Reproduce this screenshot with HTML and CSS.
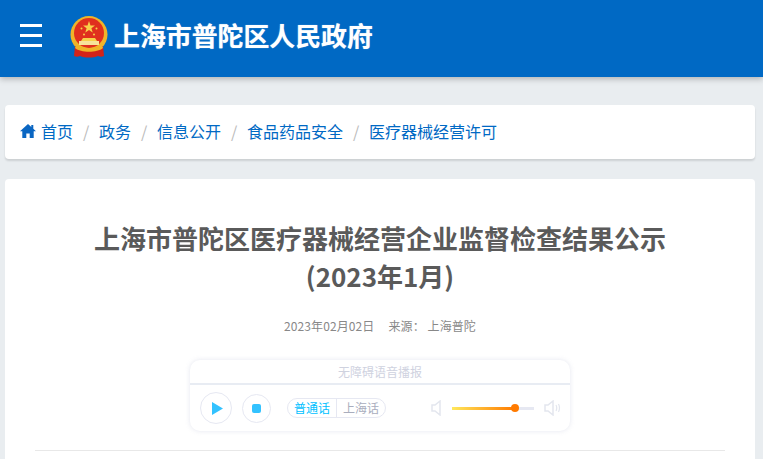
FILE: index.html
```html
<!DOCTYPE html>
<html lang="zh-CN">
  <head>
    <meta charset="UTF-8" />
    <meta name="viewport" content="width=device-width, initial-scale=1.0" />
    <title>上海市普陀区人民政府</title>
    <link rel="stylesheet" href="styles.css">
  </head>
  <body>
    <header class="site-header">
      <button class="menu-btn" aria-label="菜单"><span></span><span></span><span></span></button>
      <svg class="emblem" viewBox="0 0 40 42" width="40" height="42">
        <circle cx="20" cy="18.500" r="18.500" fill="#f0b429" />
        <circle cx="20" cy="17" r="15" fill="#e0301e" />
        <polygon points="20,5 21.500,9.500 26,9.500 22.400,12.200 23.700,16.500 20,13.900 16.300,16.500 17.600,12.200 14,9.500 18.500,9.500" fill="#f7d24a" />
        <circle cx="12.500" cy="12.500" r="1" fill="#f7d24a" />
        <circle cx="27.500" cy="12.500" r="1" fill="#f7d24a" />
        <circle cx="15" cy="18.500" r="1" fill="#f7d24a" />
        <circle cx="25" cy="18.500" r="1" fill="#f7d24a" />
        <path d="M14 22h12l2 3H12z" fill="#f7d24a" />
        <rect x="10" y="25" width="20" height="4" fill="#f7e39a" />
        <path d="M6 30c5 3 23 3 28 0l1 10c-2 1-4 1-6 0-5 2-13 2-18 0-2 1-4 1-6 0z" fill="#d3231a" />
        <path d="M7 29c4 4 22 4 26 0l1 3c-6 5-22 5-28 0z" fill="#f0b429" />
      </svg>
      <div class="site-name">上海市普陀区人民政府</div>
    </header>

    <nav class="crumbs card">
      <svg class="home-icon" viewBox="0 0 16 14" width="16" height="14">
        <path d="M8 0 0 7.200h2.300V14h4V9.600h3.400V14h4V7.200H16l-2.700-2.400V1h-2v2z" fill="#0a66c2" />
      </svg>
      <a href="#">首页</a><i>/</i>
      <a href="#">政务</a><i>/</i>
      <a href="#">信息公开</a><i>/</i>
      <a href="#">食品药品安全</a><i>/</i>
      <a href="#">医疗器械经营许可</a>
    </nav>

    <main class="article card">
      <h1>上海市普陀区医疗器械经营企业监督检查结果公示<br>(2023年1月)</h1>
      <div class="meta"><span>2023年02月02日</span><span>来源：&nbsp;上海普陀</span></div>

      <div class="player">
        <div class="player-title">无障碍语音播报</div>
        <div class="player-controls">
          <button class="round-btn play" aria-label="播放">
            <svg viewBox="0 0 11 13" width="11" height="13"><path d="M0 0l11 6.500L0 13z" fill="#33c2ff" /></svg>
          </button>
          <button class="round-btn stop" aria-label="停止"><span></span></button>
          <div class="lang">
            <span class="on">普通话</span><span>上海话</span>
          </div>
          <svg class="vol-icon low" viewBox="0 0 12 16" width="12" height="16">
            <path d="M9 1 4 5H1v6h3l5 4z" fill="none" stroke="#e3e6ee" stroke-width="1.500" />
          </svg>
          <div class="slider"><div class="slider-fill" style="width: 77%"></div></div>
          <svg class="vol-icon high" viewBox="0 0 17 16" width="17" height="16">
            <path d="M9 1 4 5H1v6h3l5 4z" fill="none" stroke="#e3e6ee" stroke-width="1.500" />
            <path d="M12 5q1.500 3 0 6M14.500 4q2 4 0 8" fill="none" stroke="#e3e6ee" stroke-width="1.200" />
          </svg>
        </div>
      </div>
      <hr class="rule">
    </main>
  </body>
</html>
```

FILE: styles.css
```css
* {
  box-sizing: border-box;
}

html,
body {
  height: 459px;
  overflow: hidden;
}

body {
  margin: 0;
  background: #e9edf0;
  font-family: "Noto Sans CJK SC", "Liberation Sans", sans-serif;
}

.site-header {
  display: flex;
  align-items: center;
  height: 77px;
  padding: 0 0 6px 20px;
  background: #0069c4;
  box-shadow: 0 2px 6px rgba(0, 0, 0, 0.25);
}

.menu-btn {
  display: flex;
  flex-direction: column;
  gap: 7px;
  width: 22px;
  padding: 0;
  border: 0;
  background: none;
}

.menu-btn span {
  height: 3px;
  background: #fff;
}

.emblem {
  margin-left: 27px;
  margin-top: 2px;
}

.site-name {
  margin-left: 5px;
  margin-bottom: 2px;
  color: #fff;
  font-size: 25.900px;
  font-weight: 700;
  text-shadow: 0 0 1px rgba(255, 255, 255, 0.6);
}

.card {
  width: 750px;
  margin-left: 5px;
  background: #fff;
  border-radius: 4px;
}

.crumbs {
  display: flex;
  align-items: center;
  height: 54px;
  margin-top: 28px;
  padding: 0 0 2px 15px;
  font-size: 16px;
  box-shadow: 0 2px 2px rgba(0, 0, 0, 0.12);
}

.crumbs a {
  color: #0069c4;
  text-decoration: none;
}

.crumbs i {
  width: 26px;
  color: #bbb;
  text-align: center;
  font-style: normal;
}

.home-icon {
  margin-right: 5px;
}

.article {
  height: 300px;
  margin-top: 20px;
  padding: 40px 30px 0;
  text-align: center;
}

.article h1 {
  margin: 0;
  color: #5a5a5a;
  font-size: 26px;
  line-height: 38px;
  font-weight: 700;
}

.meta {
  display: flex;
  justify-content: center;
  gap: 14px;
  margin-top: 22px;
  color: #888;
  font-size: 12px;
  line-height: 18px;
  letter-spacing: 0.1px;
}

.player {
  width: 380px;
  height: 71px;
  margin: 25px auto 0;
  background: #fff;
  border-radius: 10px;
  box-shadow: 0 0 5px rgba(130, 140, 180, 0.22);
}

.player-title {
  height: 25px;
  border-bottom: 2px solid #e8ecf3;
  color: #cfd2df;
  font-size: 12px;
  line-height: 24px;
}

.player-controls {
  display: flex;
  align-items: center;
  height: 46px;
  padding-left: 10px;
}

.round-btn {
  display: flex;
  align-items: center;
  justify-content: center;
  padding: 0;
  border: 1px solid #e6e8f2;
  border-radius: 50%;
  background: #fff;
}

.round-btn.play {
  width: 32px;
  height: 32px;
  padding-left: 2px;
}

.round-btn.stop {
  width: 29px;
  height: 29px;
  margin-left: 10px;
}

.round-btn.stop span {
  width: 9px;
  height: 9px;
  border-radius: 2px;
  background: #33c2ff;
}

.lang {
  display: flex;
  height: 20px;
  margin-left: 16px;
  border: 1px solid #e6e8f2;
  border-radius: 10px;
  color: #a9adbd;
  font-size: 12px;
  line-height: 18px;
}

.lang span {
  padding: 0 6px;
}

.lang span.on {
  border-right: 1px solid #e6e8f2;
  color: #00bfff;
}

.vol-icon.low {
  margin-left: 45px;
}

.slider {
  width: 82px;
  height: 3px;
  margin-left: 9px;
  background: #e6e8f2;
}

.slider-fill {
  position: relative;
  height: 100%;
  background: linear-gradient(90deg, #ffe85c, #ff7a00);
}

/* knob sits on top of the track */
.slider-fill::after {
  content: "";
  position: absolute;
  right: -4px;
  top: -2.500px;
  width: 8px;
  height: 8px;
  border-radius: 50%;
  background: #ff7a00;
}

.vol-icon.high {
  margin-left: 10px;
}

.rule {
  height: 1px;
  margin: 19px 0 0;
  border: 0;
  background: #e8e8e8;
}
```
